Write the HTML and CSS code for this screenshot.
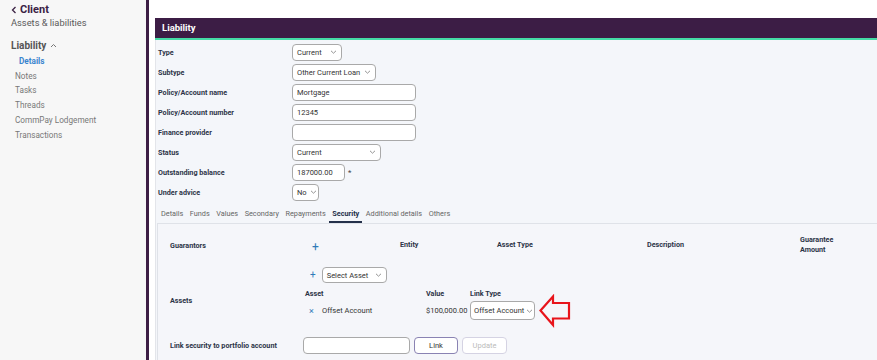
FILE: index.html
```html
<!DOCTYPE html>
<html lang="en">
<head>
    <meta charset="UTF-8">
    <title>Liability - Security</title>
    <link rel="stylesheet" href="styles.css">
</head>
<body>
<div class="app">

    <!-- Sidebar -->
    <aside class="sidebar">
        <div class="back">
            <svg class="back-chev" width="6" height="8" viewBox="0 0 6 8"><path d="M4.5 1 L1.5 4 L4.5 7" fill="none" stroke="#3b2244" stroke-width="1.3"/></svg>
            Client
        </div>
        <div class="crumb">Assets &amp; liabilities</div>
        <div class="group">
            Liability
            <svg width="7" height="5" viewBox="0 0 7 5"><path d="M1 4 L3.5 1.5 L6 4" fill="none" stroke="#777" stroke-width="1"/></svg>
        </div>
        <ul class="nav">
            <li class="active">Details</li>
            <li>Notes</li>
            <li>Tasks</li>
            <li>Threads</li>
            <li>CommPay Lodgement</li>
            <li>Transactions</li>
        </ul>
    </aside>

    <!-- Main -->
    <main class="main">
        <section class="panel">
            <div class="panel-head">Liability</div>
            <div class="panel-body">

                <div class="form">
                    <div class="row">
                        <label>Type</label>
                        <div class="select w-type"><span>Current</span><svg width="7" height="4" viewBox="0 0 7 4"><path d="M1 0.8 L3.5 3.2 L6 0.8" fill="none" stroke="#888" stroke-width="0.9"/></svg></div>
                    </div>
                    <div class="row">
                        <label>Subtype</label>
                        <div class="select w-subtype"><span>Other Current Loan</span><svg width="7" height="4" viewBox="0 0 7 4"><path d="M1 0.8 L3.5 3.2 L6 0.8" fill="none" stroke="#888" stroke-width="0.9"/></svg></div>
                    </div>
                    <div class="row">
                        <label>Policy/Account name</label>
                        <input class="input w-text" value="Mortgage">
                    </div>
                    <div class="row">
                        <label>Policy/Account number</label>
                        <input class="input w-text" value="12345">
                    </div>
                    <div class="row">
                        <label>Finance provider</label>
                        <input class="input w-text" value="">
                    </div>
                    <div class="row">
                        <label>Status</label>
                        <div class="select w-status"><span>Current</span><svg width="7" height="4" viewBox="0 0 7 4"><path d="M1 0.8 L3.5 3.2 L6 0.8" fill="none" stroke="#888" stroke-width="0.9"/></svg></div>
                    </div>
                    <div class="row">
                        <label>Outstanding balance</label>
                        <input class="input w-balance" value="187000.00">
                        <span class="req">*</span>
                    </div>
                    <div class="row">
                        <label>Under advice</label>
                        <div class="select w-advice"><span>No</span><svg width="7" height="4" viewBox="0 0 7 4"><path d="M1 0.8 L3.5 3.2 L6 0.8" fill="none" stroke="#888" stroke-width="0.9"/></svg></div>
                    </div>
                </div>

                <!-- Tabs -->
                <nav class="tabs">
                    <span class="tab">Details</span>
                    <span class="tab">Funds</span>
                    <span class="tab">Values</span>
                    <span class="tab">Secondary</span>
                    <span class="tab">Repayments</span>
                    <span class="tab active">Security</span>
                    <span class="tab">Additional details</span>
                    <span class="tab">Others</span>
                </nav>

                <!-- Security -->
                <div class="security">
                    <div class="sec-row guarantors">
                        <div class="sec-label">Guarantors</div>
                        <div class="g-plus"><span class="plus">+</span></div>
                        <div class="g-col g-entity">Entity</div>
                        <div class="g-col g-type">Asset Type</div>
                        <div class="g-col g-desc">Description</div>
                        <div class="g-col g-amount">Guarantee<br>Amount</div>
                    </div>

                    <div class="sec-row add-asset">
                        <div class="sec-label"></div>
                        <span class="plus small">+</span>
                        <div class="select w-asset"><span>Select Asset</span><svg width="7" height="4" viewBox="0 0 7 4"><path d="M1 0.8 L3.5 3.2 L6 0.8" fill="none" stroke="#888" stroke-width="0.9"/></svg></div>
                    </div>

                    <div class="sec-row assets">
                        <div class="sec-label">Assets</div>
                        <div class="asset-table">
                            <div class="th th-asset">Asset</div>
                            <div class="th">Value</div>
                            <div class="th">Link Type</div>
                            <div class="td td-asset"><span class="remove">×</span>Offset Account</div>
                            <div class="td">$100,000.00</div>
                            <div class="td link-cell">
                                <div class="select w-link"><span>Offset Account</span><svg width="7" height="4" viewBox="0 0 7 4"><path d="M1 0.8 L3.5 3.2 L6 0.8" fill="none" stroke="#888" stroke-width="0.9"/></svg></div>
                                <svg class="arrow" width="34" height="34" viewBox="0 0 34 34">
                                    <path d="M2.5 16.5 L15 2.5 L15 9 L31 9 L31 24.5 L15 24.5 L15 31 Z" fill="none" stroke="#e8141b" stroke-width="2.2" stroke-linejoin="miter"/>
                                </svg>
                            </div>
                        </div>
                    </div>

                    <div class="sec-row link-row">
                        <div class="sec-label">Link security to portfolio account</div>
                        <input class="input w-portfolio" value="">
                        <button class="btn btn-link">Link</button>
                        <button class="btn btn-update" disabled>Update</button>
                    </div>
                </div>

            </div>
        </section>
    </main>

</div>
</body>
</html>
```

FILE: styles.css
```css
* {
    margin: 0;
    padding: 0;
    box-sizing: border-box;
    font-family: Roboto, "Liberation Sans", sans-serif;
}

body {
    background: white;
    overflow: hidden;
}

.app {
    display: flex;
    height: 100vh;
    overflow: hidden;
}

/* Sidebar */
.sidebar {
    width: 149px;
    flex-shrink: 0;
    background: #f7f7f7;
    border-right: 3px solid #3d1e45;
    padding: 3px 0 0 11px;
}

.back {
    display: flex;
    align-items: center;
    gap: 3px;
    height: 13px;
    font-size: 11px;
    font-weight: bold;
    color: #3b2244;
}

.crumb {
    font-size: 9.3px;
    line-height: 13px;
    color: #5a5a5a;
}

.group {
    display: flex;
    align-items: center;
    gap: 4px;
    margin-top: 10px;
    font-size: 10px;
    line-height: 13px;
    font-weight: bold;
    color: #555;
}

.nav {
    list-style: none;
    margin-top: 2px;
}

.nav li {
    font-size: 8.2px;
    line-height: 14.7px;
    color: #777;
    padding-left: 4px;
}

.nav li.active {
    color: #3a85cf;
    font-weight: bold;
    padding-left: 8px;
}

/* Main */
.main {
    flex: 1;
    min-width: 0;
    padding: 18px 0 0 6px;
    display: flex;
}

.panel {
    flex: 1;
    display: flex;
    flex-direction: column;
}

.panel-head {
    height: 22px;
    flex-shrink: 0;
    background: #3c1d45;
    border-bottom: 2px solid #45dba6;
    color: white;
    font-size: 9.5px;
    font-weight: bold;
    line-height: 20px;
    padding-left: 7px;
}

.panel-body {
    flex: 1;
    display: flex;
    flex-direction: column;
    background: #f4f6fa;
    border-left: 1px solid #e3e5ea;
    padding: 2px 0 0 2px;
}

/* Form */
.row {
    display: flex;
    align-items: center;
    height: 20px;
}

.row label {
    width: 134px;
    font-size: 7.2px;
    font-weight: bold;
    color: #2c3447;
}

.input,
.select {
    height: 17px;
    border: 1px solid #a9a9a9;
    border-radius: 4px;
    background: white;
    font-size: 7.5px;
    color: #333;
    padding: 0 4px;
}

.input {
    outline: none;
}

.select {
    display: flex;
    align-items: center;
    justify-content: space-between;
    gap: 3px;
    white-space: nowrap;
}

.select svg {
    flex-shrink: 0;
}

.w-type { width: 50px; }
.w-subtype { width: 84px; }
.w-text { width: 124px; }
.w-status { width: 89px; }
.w-balance { width: 53px; }
.w-advice { width: 27px; }

.req {
    font-size: 8px;
    color: #444;
    margin-left: 3px;
}

/* Tabs */
.tabs {
    display: flex;
    gap: 0.5px;
    margin-top: 4px;
    flex-shrink: 0;
}

.tab {
    font-size: 7.3px;
    line-height: 15px;
    color: #666;
    padding: 0 3px;
    border-bottom: 2px solid transparent;
}

.tab.active {
    color: #24304a;
    font-weight: bold;
    border-bottom-color: #24304a;
}

/* Security */
.security {
    flex: 1;
    margin-left: -1px;
    background: #f5f6fa;
    border: 1px solid #dfe2e8;
    border-right: none;
    border-bottom: none;
    padding: 11px 0 0 12px;
}

.sec-row {
    display: flex;
    align-items: center;
}

.sec-label {
    width: 133px;
    flex-shrink: 0;
    font-size: 7.2px;
    font-weight: bold;
    color: #2c3447;
}

.guarantors {
    height: 20px;
}

.g-plus {
    width: 97px;
    padding-left: 9px;
}

.plus {
    color: #2f7ab8;
    font-size: 12px;
    line-height: 10px;
}

.plus.small {
    font-size: 10px;
    margin: 0 6px 0 7px;
}

.g-col {
    font-size: 7.2px;
    font-weight: bold;
    color: #2c3447;
    line-height: 10px;
}

.g-entity { width: 97px; }
.g-type { width: 150px; }
.g-desc { width: 153px; }

.add-asset {
    margin-top: 12px;
    height: 16px;
}

.w-asset {
    width: 65px;
    height: 16px;
}

.assets {
    margin-top: 6px;
}

.assets .sec-label {
    margin-top: -9px;
}

.asset-table {
    display: grid;
    grid-template-columns: 123px 44px auto;
    row-gap: 2px;
    align-items: center;
}

.th {
    font-size: 7.2px;
    font-weight: bold;
    color: #2c3447;
    line-height: 10px;
}

.th-asset {
    padding-left: 2px;
}

.td {
    font-size: 7.5px;
    color: #333;
}

.td-asset {
    display: flex;
    align-items: center;
}

.remove {
    color: #2f7ab8;
    font-size: 9px;
    width: 19px;
    padding-left: 6px;
}

.link-cell {
    position: relative;
}

.w-link {
    width: 65px;
    height: 19px;
    padding: 0 3px;
    gap: 2px;
}

.arrow {
    position: absolute;
    left: 68px;
    top: -7px;
}

.link-row {
    margin-top: 17px;
}

.w-portfolio {
    width: 107px;
}

.btn {
    height: 17px;
    width: 44px;
    border-radius: 4px;
    background: white;
    font-size: 7.5px;
    margin-left: 4px;
}

.btn-link {
    border: 1.5px solid #8a83b3;
    color: #333;
}

.btn-update {
    width: 45px;
    border: 1px solid #d5d3e3;
    color: #bbb;
}
```
